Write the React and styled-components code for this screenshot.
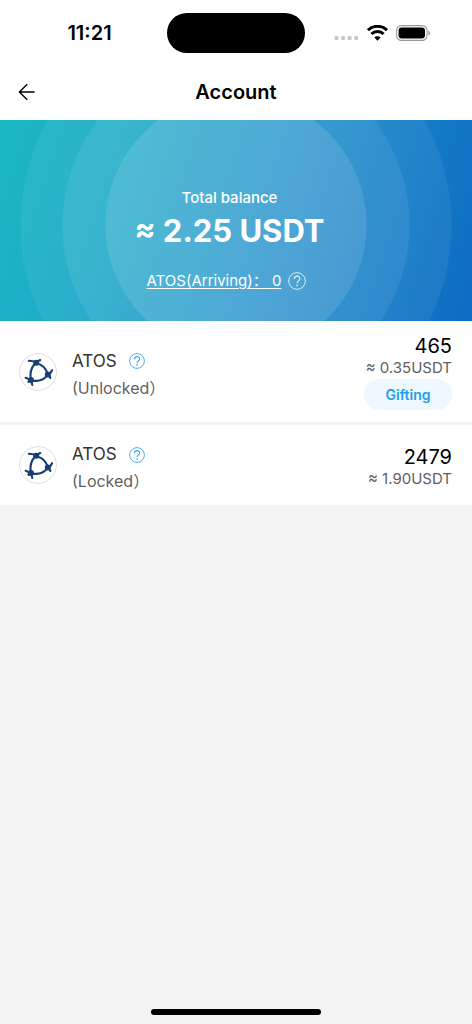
import React from 'react';
import styled, { createGlobalStyle } from 'styled-components';

const navy = '#173f73';
const blue = '#1a9fe8';

const GlobalStyle = createGlobalStyle`
  * {
    box-sizing: border-box;
  }

  body {
    margin: 0;
    background: #f3f3f3;
    color: #000;
    font-family: Inter, "Noto Sans CJK SC", sans-serif;
  }

  button {
    border: none;
    padding: 0;
    background: none;
    font-family: inherit;
    cursor: pointer;
  }
`;

const Page = styled.div`
  display: flex;
  flex-direction: column;
  min-height: 100vh;
`;

const StatusBar = styled.div`
  display: grid;
  grid-template-columns: 1fr auto 1fr;
  align-items: center;
  height: 65px;
  background: #fff;
`;

const Clock = styled.time`
  padding-left: 12px;
  text-align: center;
  font-size: 20px;
  font-weight: 600;
`;

const Island = styled.div`
  width: 138px;
  height: 40px;
  border-radius: 20px;
  background: #000;
`;

const StatusIcons = styled.div`
  display: flex;
  align-items: center;
  gap: 8px;
  padding-left: 29px;
`;

const Header = styled.header`
  display: grid;
  grid-template-columns: 1fr auto 1fr;
  align-items: center;
  height: 55px;
  padding: 0 18px 2px;
  background: #fff;
`;

const BackButton = styled.button`
  display: flex;
  justify-self: start;
`;

const Title = styled.h1`
  margin: 0;
  font-size: 20px;
  font-weight: 600;
`;

const Hero = styled.section`
  display: flex;
  flex-direction: column;
  align-items: center;
  height: 201px;
  padding: 66px 13px 0 0;
  color: #fff;
  background:
    radial-gradient(circle at 50% 105px, rgba(255, 255, 255, 0.11) 130px, transparent 131px),
    radial-gradient(circle at 50% 105px, rgba(255, 255, 255, 0.07) 173px, transparent 174px),
    radial-gradient(circle at 50% 105px, rgba(255, 255, 255, 0.06) 215px, transparent 216px),
    linear-gradient(108deg, #1cb8c4 0%, #1caac8 25%, #1c90ca 55%, #137ac6 82%, #0e6cc2 100%);
`;

const HeroLabel = styled.div`
  font-size: 15px;
  font-weight: 500;
  line-height: 24px;
`;

const HeroAmount = styled.div`
  font-size: 31px;
  font-weight: 700;
  line-height: 42px;
`;

const Arriving = styled.div`
  display: flex;
  align-items: center;
  gap: 7px;
  margin-top: 18px;
  padding-right: 6px;
  line-height: 22px;
`;

const ArrivingLink = styled.a`
  color: inherit;
  font-size: 15px;
  text-underline-offset: 2px;
`;

const HelpButton = styled.button`
  display: flex;
  color: ${(props) => props.$color};
`;

const AssetList = styled.ul`
  display: flex;
  flex-direction: column;
  gap: 3px;
  margin: 0;
  padding: 0;
  list-style: none;
`;

const AssetRow = styled.li`
  display: flex;
  align-items: center;
  min-height: 80px;
  padding: 10px 20px 10px 19px;
  background: #fff;
`;

const Coin = styled.span`
  display: flex;
  margin-right: 15px;
`;

const AssetInfo = styled.div`
  flex: 1;
  padding-top: 6px;
`;

const AssetName = styled.div`
  display: flex;
  align-items: center;
  gap: 12px;
  color: #333;
  font-size: 17px;
  line-height: 27px;
`;

const AssetState = styled.div`
  color: #5f5f5f;
  font-size: 16px;
  line-height: 27px;
`;

const Balance = styled.div`
  display: flex;
  flex-direction: column;
  align-items: flex-end;
  padding-top: 3px;
`;

const Amount = styled.div`
  font-size: 20px;
  line-height: 24px;
`;

const Worth = styled.div`
  color: #606060;
  font-size: 15px;
  line-height: 20px;
`;

const GiftButton = styled.button`
  width: 88px;
  height: 31px;
  margin: 1px 0 2px;
  border-radius: 16px;
  background: #eff8fe;
  color: ${blue};
  font-size: 14px;
  font-weight: 600;
`;

const HomeIndicator = styled.div`
  width: 170px;
  height: 6px;
  margin: auto auto 9px;
  border-radius: 3px;
  background: #000;
`;

const Signal = () => (
  <svg width="25" height="20" viewBox="0 0 25 20" fill="#c8c8c8" aria-hidden="true">
    <circle cx="2.5" cy="15" r="2.2" />
    <circle cx="9" cy="15" r="2.2" />
    <circle cx="15.6" cy="15" r="2.2" />
    <circle cx="22.2" cy="15" r="2.2" />
  </svg>
);

const Wifi = () => (
  <svg width="21" height="16" viewBox="0 0 21 16" fill="none" stroke="#000" strokeWidth="3" aria-hidden="true">
    <path d="M1 5.2a13.6 13.6 0 0 1 19 0" />
    <path d="M4.4 9a8.7 8.7 0 0 1 12.2 0" />
    <path d="M10.5 15.8 7.3 12.5a4.6 4.6 0 0 1 6.4 0z" fill="#000" stroke="none" />
  </svg>
);

const Battery = () => (
  <svg width="35" height="16" viewBox="0 0 35 16" aria-hidden="true">
    <rect x="0.6" y="0.6" width="30.4" height="14.8" rx="4.8" fill="none" stroke="#999" strokeWidth="1.1" />
    <rect x="2.6" y="2.6" width="26.4" height="10.8" rx="3.2" />
    <path d="M32.4 5.4c2.2.6 2.2 4.6 0 5.2z" fill="#999" />
  </svg>
);

const BackArrow = () => (
  <svg width="18" height="18" viewBox="0 0 18 18" fill="none" stroke="#000" strokeWidth="1.4" aria-hidden="true">
    <path d="M9.2 1.2 1.4 9l7.8 7.8M1.6 9h15" />
  </svg>
);

const HelpIcon = ({ size }) => (
  <svg width={size} height={size} viewBox="0 0 18 18" fill="none" stroke="currentColor" aria-hidden="true">
    <circle cx="9" cy="9" r="8.3" strokeWidth="1" />
    <path d="M6.2 7.1c0-4.1 5.7-4 5.7-.3 0 2-2.8 2.2-2.8 4.5" strokeWidth="1.3" />
    <circle cx="9.1" cy="13.4" r="0.9" fill="currentColor" stroke="none" />
  </svg>
);

const AtosLogo = () => (
  <svg width="38" height="38" viewBox="0 0 38 38" aria-hidden="true">
    <circle cx="19" cy="19" r="18.4" fill="#fff" stroke="#dedede" />
    <g fill="none" stroke={navy} strokeWidth="2.1" strokeLinecap="round">
      <path d="M15.6 11C11.8 15.5 10.8 20.5 11.8 26" />
      <path d="M18.2 10.4C23.6 11.8 27 15.6 28.6 20.4" />
      <path d="M13.2 27.4C19.4 28.8 25 26.4 28.4 22.4" />
      <path d="M16.5 9.2C14.5 7.4 12.5 8.2 9.8 7.8M17.5 8.8l3.8-1.8" />
      <path d="M29.5 21.2c2.6-.6 2.4-2.6 3.6-4M30 22l1.4 3" />
      <path d="M11.6 26.4c-2.2.4-3-1.2-5-1.6M12.4 28.4l.9 3.6M11 28l-1.6.8" />
    </g>
    <g fill={navy}>
      <circle cx="17.2" cy="9.8" r="3" />
      <circle cx="28.8" cy="21.4" r="3" />
      <circle cx="12" cy="27" r="3" />
    </g>
  </svg>
);

const assets = [
  { name: 'ATOS', state: '(Unlocked）', amount: '465', worth: '≈ 0.35USDT', giftable: true },
  { name: 'ATOS', state: '(Locked）', amount: '2479', worth: '≈ 1.90USDT', giftable: false },
];

const App = () => (
  <Page>
    <GlobalStyle />
    <StatusBar>
      <Clock>11:21</Clock>
      <Island />
      <StatusIcons>
        <Signal />
        <Wifi />
        <Battery />
      </StatusIcons>
    </StatusBar>

    <Header>
      <BackButton aria-label="Back">
        <BackArrow />
      </BackButton>
      <Title>Account</Title>
    </Header>

    <Hero>
      <HeroLabel>Total balance</HeroLabel>
      <HeroAmount>≈ 2.25 USDT</HeroAmount>
      <Arriving>
        <ArrivingLink href="#arriving">ATOS(Arriving)： 0</ArrivingLink>
        <HelpButton $color="#d9edf8" aria-label="About arriving ATOS">
          <HelpIcon size={18} />
        </HelpButton>
      </Arriving>
    </Hero>

    <AssetList>
      {assets.map((asset) => (
        <AssetRow key={asset.state}>
          <Coin>
            <AtosLogo />
          </Coin>
          <AssetInfo>
            <AssetName>
              {asset.name}
              <HelpButton $color="#3d9fe8" aria-label="About this balance">
                <HelpIcon size={16} />
              </HelpButton>
            </AssetName>
            <AssetState>{asset.state}</AssetState>
          </AssetInfo>
          <Balance>
            <Amount>{asset.amount}</Amount>
            <Worth>{asset.worth}</Worth>
            {asset.giftable && <GiftButton>Gifting</GiftButton>}
          </Balance>
        </AssetRow>
      ))}
    </AssetList>

    <HomeIndicator />
  </Page>
);

export default App;
